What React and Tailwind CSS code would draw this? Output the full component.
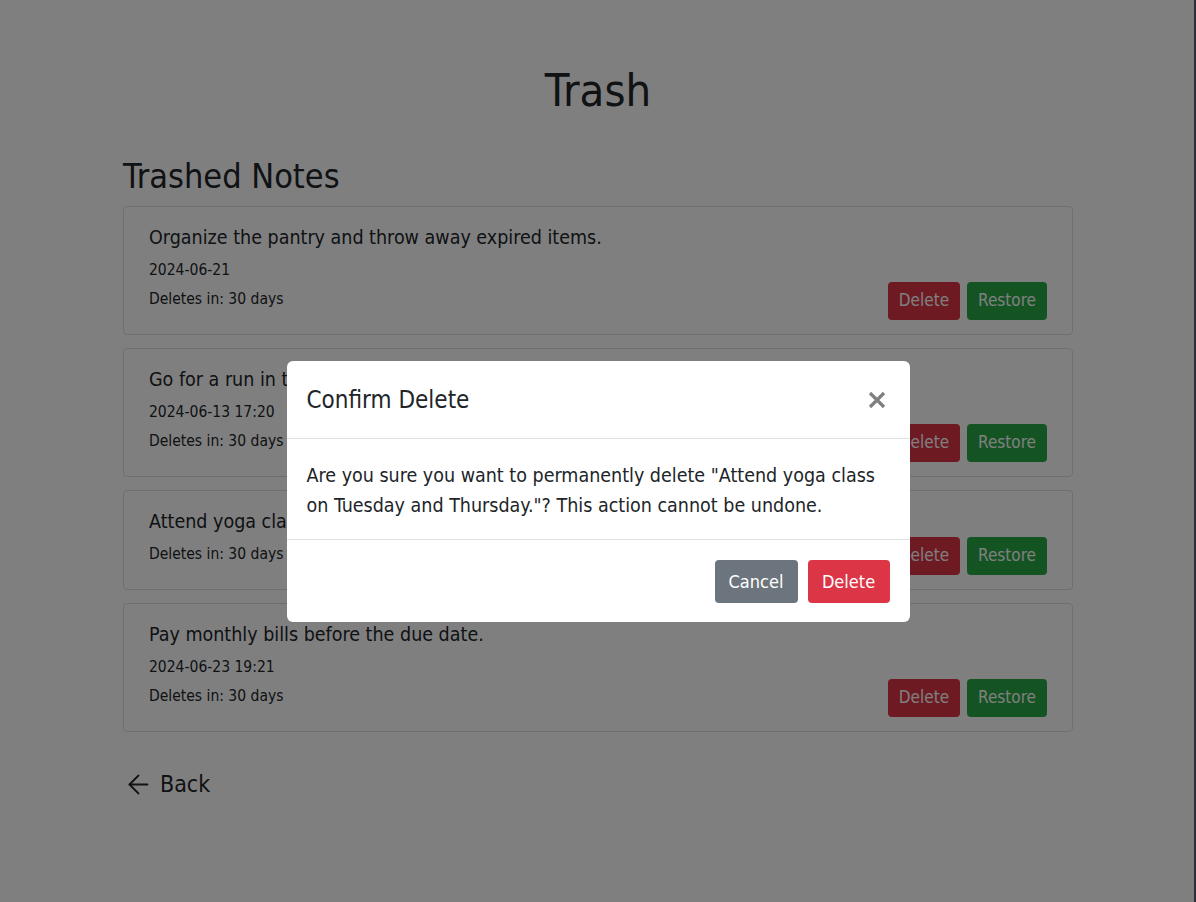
import React from "react";

const notes = [
  { text: "Organize the pantry and throw away expired items.", date: "2024-06-21" },
  { text: "Go for a run in the park before breakfast.", date: "2024-06-13 17:20" },
  { text: "Attend yoga class on Tuesday and Thursday.", date: null },
  { text: "Pay monthly bills before the due date.", date: "2024-06-23 19:21" },
];

function NoteCard({ note }) {
  return (
    <div className="flex items-end justify-between rounded-[4px] border border-[#dfdfdf] px-[25px] pt-[16px] pb-[14px]">
      <div className="mb-[9px]">
        <p className="text-[19.5px] leading-[30px]">{note.text}</p>
        {note.date && <p className="mt-[5px] text-[15.5px] leading-[24px]">{note.date}</p>}
        <p className="mt-[5px] text-[15.5px] leading-[24px]">Deletes in: 30 days</p>
      </div>
      <div className="flex gap-[7px]">
        <button className="h-[38px] rounded-[4px] bg-[#dc3545] px-[11px] text-[17px] text-white">Delete</button>
        <button className="h-[38px] rounded-[4px] bg-[#28a745] px-[11px] text-[17px] text-white">Restore</button>
      </div>
    </div>
  );
}

export default function App() {
  return (
    <div
      className="min-h-screen bg-white text-[#212529]"
      style={{ fontFamily: '"DejaVu Sans Condensed", "DejaVu Sans", sans-serif' }}
    >
      <div className="mx-auto w-[950px] pt-[64px]">
        <h1 className="text-center text-[45px] leading-[54px]">Trash</h1>
        <h2 className="mt-[38px] mb-[9px] text-[34px] leading-[41px]">Trashed Notes</h2>
        <div className="flex flex-col gap-[13px]">
          {notes.map((n, i) => (
            <NoteCard key={i} note={n} />
          ))}
        </div>
        <a className="mt-[34px] inline-flex items-center gap-[11px] pl-[5px] text-[23px] leading-[36px]">
          <svg width="21" height="21" viewBox="0 0 21 21" fill="none" stroke="currentColor" strokeWidth="1.8" strokeLinecap="round" strokeLinejoin="round">
            <path d="M19.5 10.5H1.5" />
            <path d="M10.5 1.5L1.5 10.5L10.5 19.5" />
          </svg>
          Back
        </a>
      </div>

      {/* modal backdrop */}
      <div className="fixed inset-0 flex justify-center bg-black/50 pt-[361px]">
        <div className="h-fit w-[623px] rounded-[6px] bg-white text-[#212529]">
          <div className="flex items-center justify-between border-b border-[#dee2e6] px-5 pt-[21px] pb-[20px]">
            <h3 className="text-[24px] leading-[36px]">Confirm Delete</h3>
            <button className="mr-[3px] text-[#808080]">
              <svg width="20" height="20" viewBox="0 0 20 20" fill="none" stroke="currentColor" strokeWidth="3.2" strokeLinecap="butt">
                <path d="M3 3L17 17M17 3L3 17" />
              </svg>
            </button>
          </div>
          <div className="px-5 pt-[22px] pb-[18px] text-[19.5px] leading-[30px]">
            Are you sure you want to permanently delete "Attend yoga class on Tuesday and Thursday."? This action cannot be undone.
          </div>
          <div className="flex justify-end gap-[10px] border-t border-[#dee2e6] px-5 pt-5 pb-[19px]">
            <button className="h-[43px] w-[83px] rounded-[4px] bg-[#6c757d] text-[18px] text-white">Cancel</button>
            <button className="h-[43px] w-[82px] rounded-[4px] bg-[#dc3545] text-[18px] text-white">Delete</button>
          </div>
        </div>
      </div>
      <div className="fixed top-0 right-0 bottom-0 w-[2px] bg-[#2f2c3c]" />
    </div>
  );
}
